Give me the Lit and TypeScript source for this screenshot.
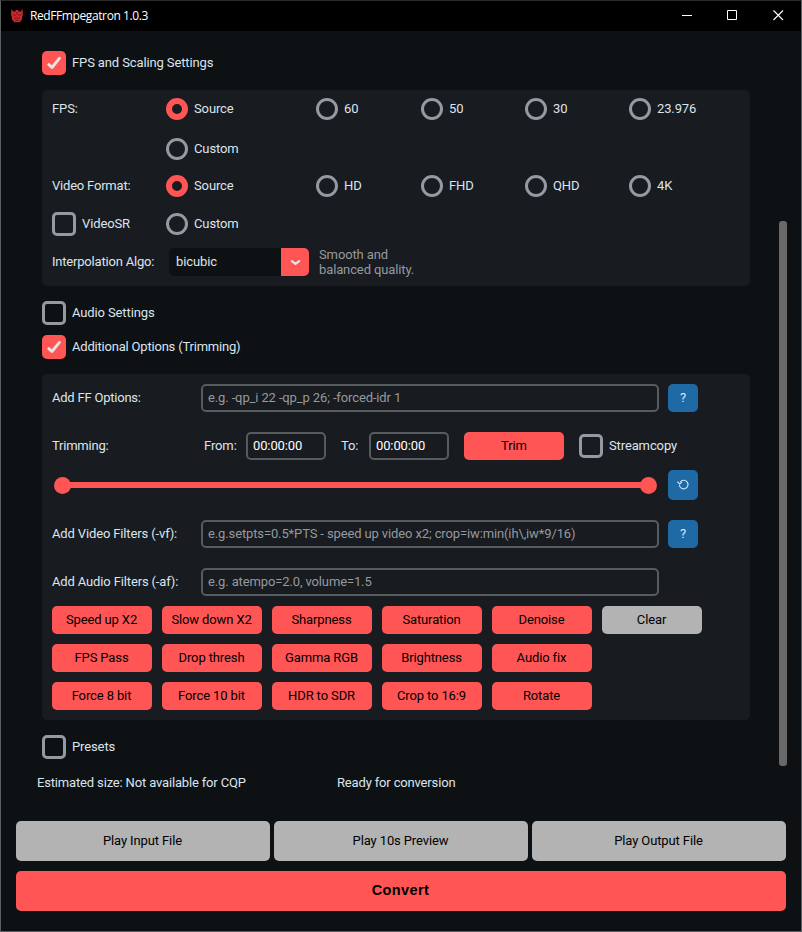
import { LitElement, html, css } from "lit";
import { customElement, property } from "lit/decorators.js";
import { classMap } from "lit/directives/class-map.js";

@customElement("check-box")
class CheckBox extends LitElement {
  @property({ type: Boolean }) checked = false;
  @property() label = "";

  static styles = css`
    :host { display: flex; align-items: center; gap: 6px; height: 24px; }
    .box {
      box-sizing: border-box; width: 24px; height: 24px; flex: none;
      border: 3px solid #949a9f; border-radius: 5px;
    }
    .on { border: 0; background: #ff5555; }
    svg { display: block; width: 24px; height: 24px; }
    .text { white-space: nowrap; }
  `;

  render() {
    return html`<span class=${classMap({ box: true, on: this.checked })}>
        ${this.checked
          ? html`<svg viewBox="0 0 24 24" fill="none" stroke="#e5e5e5" stroke-width="2.9" stroke-linecap="round" stroke-linejoin="round"><path d="M6.8 13.6 10 16.5 17.4 7.4" /></svg>`
          : null}</span
      ><span class="text">${this.label}</span>`;
  }
}

@customElement("radio-button")
class RadioButton extends LitElement {
  @property({ type: Boolean }) checked = false;
  @property() label = "";

  static styles = css`
    :host { display: flex; align-items: center; gap: 6px; height: 22px; }
    .ring {
      box-sizing: border-box; width: 22px; height: 22px; flex: none;
      border: 3px solid #949a9f; border-radius: 50%;
    }
    .on { border: 6px solid #ff5555; }
    .text { white-space: nowrap; }
  `;

  render() {
    return html`<span class=${classMap({ ring: true, on: this.checked })}></span
      ><span class="text">${this.label}</span>`;
  }
}

const FILTERS = [
  "Speed up X2", "Slow down X2", "Sharpness", "Saturation", "Denoise", "Clear",
  "FPS Pass", "Drop thresh", "Gamma RGB", "Brightness", "Audio fix", "",
  "Force 8 bit", "Force 10 bit", "HDR to SDR", "Crop to 16:9", "Rotate",
];

@customElement("app-root")
class AppRoot extends LitElement {
  static styles = css`
    :host {
      display: flex; flex-direction: column; box-sizing: border-box;
      width: 802px; height: 932px; overflow: hidden;
      border: 1px solid #5b5e60; border-top-color: #2b2b2b;
      background: #0d1114; color: #dce4ee;
      font: 13px/16px Roboto, "Liberation Sans", sans-serif;
      letter-spacing: -0.12px;
    }
    .title {
      display: flex; align-items: center; height: 30px; flex: none;
      background: #000; color: #fff;
      font: 12px/16px "Open Sans", "Noto Sans", sans-serif;
      letter-spacing: -0.4px;
    }
    .logo { width: 12px; height: 14px; margin: 0 7px 0 10px; }
    .name { flex: 1; }
    .win { width: 46px; height: 30px; flex: none; position: relative; left: 1px; }
    .main { display: flex; height: 775px; flex: none; }
    .content { width: 708px; padding: 20px 0 0 41px; flex: none; }
    .panel { border-radius: 5px; background: #181b1f; }
    .scaling { height: 196px; margin: 15px 0; box-sizing: border-box; padding: 8px 10px 0; }
    .grid {
      display: grid; grid-template-columns: 114px 150px 105px 104px 104px 1fr;
      align-items: center;
    }
    .r1 { height: 22px; }
    .r2 { height: 22px; margin-top: 18px; }
    .r3 { height: 22px; margin-top: 15px; }
    .r4 { height: 24px; margin-top: 15px; }
    .second { grid-column: 2; }
    .tight { letter-spacing: -0.2px; }
    .algo { display: flex; align-items: center; height: 30px; margin-top: 11px; }
    .algo .lbl { width: 117px; }
    .combo {
      display: flex; width: 140px; height: 28px; border-radius: 5px; overflow: hidden;
      background: #0d1114; line-height: 27px; margin-right: 10px;
    }
    .combo .val { flex: 1; padding-left: 7px; }
    .combo svg { width: 28px; height: 28px; background: #ff5555; }
    .hint { color: #949a9f; line-height: 15px; }
    .gap10 { margin-top: 10px; }
    .trim { height: 346px; margin: 15px 0; box-sizing: border-box; padding: 10px 10px 0; }
    .row { display: flex; align-items: center; height: 28px; }
    .row + .row { margin-top: 20px; }
    .row .lbl { width: 149px; letter-spacing: -0.22px; }
    .row .filter { letter-spacing: -0.14px; }
    .lbl { white-space: nowrap; }
    .field {
      box-sizing: border-box; width: 458px; height: 28px; padding: 0 5px;
      border: 2px solid #565b5e; border-radius: 5px; line-height: 23px;
      color: #949a9f; white-space: nowrap; letter-spacing: -0.125px;
    }
    .time { width: 80px; color: #fff; }
    .btn {
      display: flex; align-items: center; justify-content: center;
      border-radius: 5px; background: #ff5555; color: #000; height: 28px; width: 100px;
    }
    .grey { background: #b3b3b3; }
    .blue { width: 30px; margin-left: 9px; background: #1f6aa5; color: #dce4ee; }
    .from { width: 42px; padding-left: 3px; }
    .to { width: 28px; padding-left: 15px; }
    .go { margin: 0 15px; }
    .slider { display: flex; align-items: center; height: 30px; margin-top: 10px; }
    .rail { display: flex; align-items: center; width: 603px; height: 17px; margin-left: 2px; }
    .knob { width: 17px; height: 17px; border-radius: 50%; background: #ff5555; flex: none; }
    .bar { width: 577px; height: 6px; margin: 0 -4px; background: #ff5555; flex: none; }
    .reset { height: 30px; margin-left: 11px; }
    .vf { margin-top: 20px; }
    .filters { display: grid; grid-template-columns: repeat(6, 100px); gap: 10px; margin-top: 10px; }
    .filters .btn { padding-right: 1px; box-sizing: border-box; }
    .status { display: flex; margin: 16px 0 0 -5px; }
    .status span { width: 300px; letter-spacing: -0.16px; }
    .thumb { width: 8px; height: 545px; margin: 190px 0 0 29px; border-radius: 3px; background: #696969; }
    .actions { display: grid; grid-template-columns: repeat(3, 254px); column-gap: 4px; row-gap: 10px; margin: 15px 0 0 15px; }
    .wide { width: auto; height: 40px; padding: 0 1px 1px 0; box-sizing: border-box; }
    .convert {
      grid-column: 1 / 4; font: 700 14.5px/16px "Liberation Sans", sans-serif;
      letter-spacing: 0.4px; padding-bottom: 2px;
    }
  `;

  private help() {
    return html`<div class="btn blue">?</div>`;
  }

  render() {
    return html`
      <div class="title">
        <svg class="logo" viewBox="0 0 12 14">
          <path fill="#c5282d" d="M.5 0 2.5 2.8 4.5 2.2 5 1H7L7.5 2.2 9.5 2.8 11.5 0 12 5 11.4 7 11 10.4 8.6 13.2H3.4L1 10.4 .6 7 0 5Z" />
          <path fill="none" stroke="#5b1013" stroke-width=".7" d="M1.8 5.2 5 7 M10.2 5.2 7 7 M3.2 9.7 5 9H7L8.8 9.7 M4.4 11.4H7.6 M6 3V6" />
        </svg>
        <span class="name">RedFFmpegatron 1.0.3</span>
        <svg class="win" viewBox="0 0 46 30"><path d="M18 14.5H28" stroke="#fff" /></svg>
        <svg class="win" viewBox="0 0 46 30"><path d="M17.5 9.5h9v9h-9z" stroke="#fff" fill="none" /></svg>
        <svg class="win" viewBox="0 0 46 30"><path d="M17.5 9.5l9.5 9.5M27 9.5 17.5 19" stroke="#fff" stroke-width="1.1" /></svg>
      </div>
      <div class="main">
        <div class="content">
          <check-box checked label="FPS and Scaling Settings"></check-box>
          <div class="panel scaling">
            <div class="grid r1">
              <span>FPS:</span>
              <radio-button checked label="Source"></radio-button>
              ${["60", "50", "30", "23.976"].map((l) => html`<radio-button label=${l}></radio-button>`)}
            </div>
            <div class="grid r2"><radio-button class="second" label="Custom"></radio-button></div>
            <div class="grid r3">
              <span class="tight">Video Format:</span>
              <radio-button checked label="Source"></radio-button>
              ${["HD", "FHD", "QHD", "4K"].map((l) => html`<radio-button label=${l}></radio-button>`)}
            </div>
            <div class="grid r4">
              <check-box label="VideoSR"></check-box>
              <radio-button label="Custom"></radio-button>
            </div>
            <div class="algo">
              <span class="lbl tight">Interpolation Algo:</span>
              <div class="combo">
                <span class="val">bicubic</span>
                <svg viewBox="0 0 28 28"><path d="M10.8 13.1 14.5 15.8 18.2 13.1" fill="none" stroke="#e5e5e5" stroke-width="2.2" stroke-linecap="round" stroke-linejoin="round" /></svg>
              </div>
              <span class="hint">Smooth and<br />balanced quality.</span>
            </div>
          </div>
          <check-box label="Audio Settings"></check-box>
          <check-box class="gap10 tight" checked label="Additional Options (Trimming)"></check-box>
          <div class="panel trim">
            <div class="row">
              <span class="lbl">Add FF Options:</span>
              <div class="field">e.g. -qp_i 22 -qp_p 26; -forced-idr 1</div>
              ${this.help()}
            </div>
            <div class="row">
              <span class="lbl">Trimming:</span>
              <span class="from">From:</span>
              <div class="field time">00:00:00</div>
              <span class="to">To:</span>
              <div class="field time">00:00:00</div>
              <div class="btn go">Trim</div>
              <check-box label="Streamcopy"></check-box>
            </div>
            <div class="slider">
              <div class="rail"><span class="knob"></span><span class="bar"></span><span class="knob"></span></div>
              <div class="btn blue reset">
                <svg width="12" height="12" viewBox="0 0 12 12" fill="none" stroke="#dce4ee" stroke-width="1.1"><path d="M3.2 3A4.3 4.3 0 1 1 2.4 6M.4 2.6 2.6 4.9 4.9 3.2" /></svg>
              </div>
            </div>
            <div class="row vf">
              <span class="lbl filter">Add Video Filters (-vf):</span>
              <div class="field">e.g.setpts=0.5*PTS - speed up video x2; crop=iw:min(ih\\,iw*9/16)</div>
              ${this.help()}
            </div>
            <div class="row">
              <span class="lbl filter">Add Audio Filters (-af):</span>
              <div class="field">e.g. atempo=2.0, volume=1.5</div>
            </div>
            <div class="filters">
              ${FILTERS.map((f) =>
                f ? html`<div class=${classMap({ btn: true, grey: f === "Clear" })}>${f}</div>` : html`<span></span>`
              )}
            </div>
          </div>
          <check-box label="Presets"></check-box>
          <div class="status"><span>Estimated size: Not available for CQP</span><span>Ready for conversion</span></div>
        </div>
        <div class="thumb"></div>
      </div>
      <div class="actions">
        ${["Play Input File", "Play 10s Preview", "Play Output File"].map((l) => html`<div class="btn grey wide">${l}</div>`)}
        <div class="btn wide convert">Convert</div>
      </div>
    `;
  }
}
